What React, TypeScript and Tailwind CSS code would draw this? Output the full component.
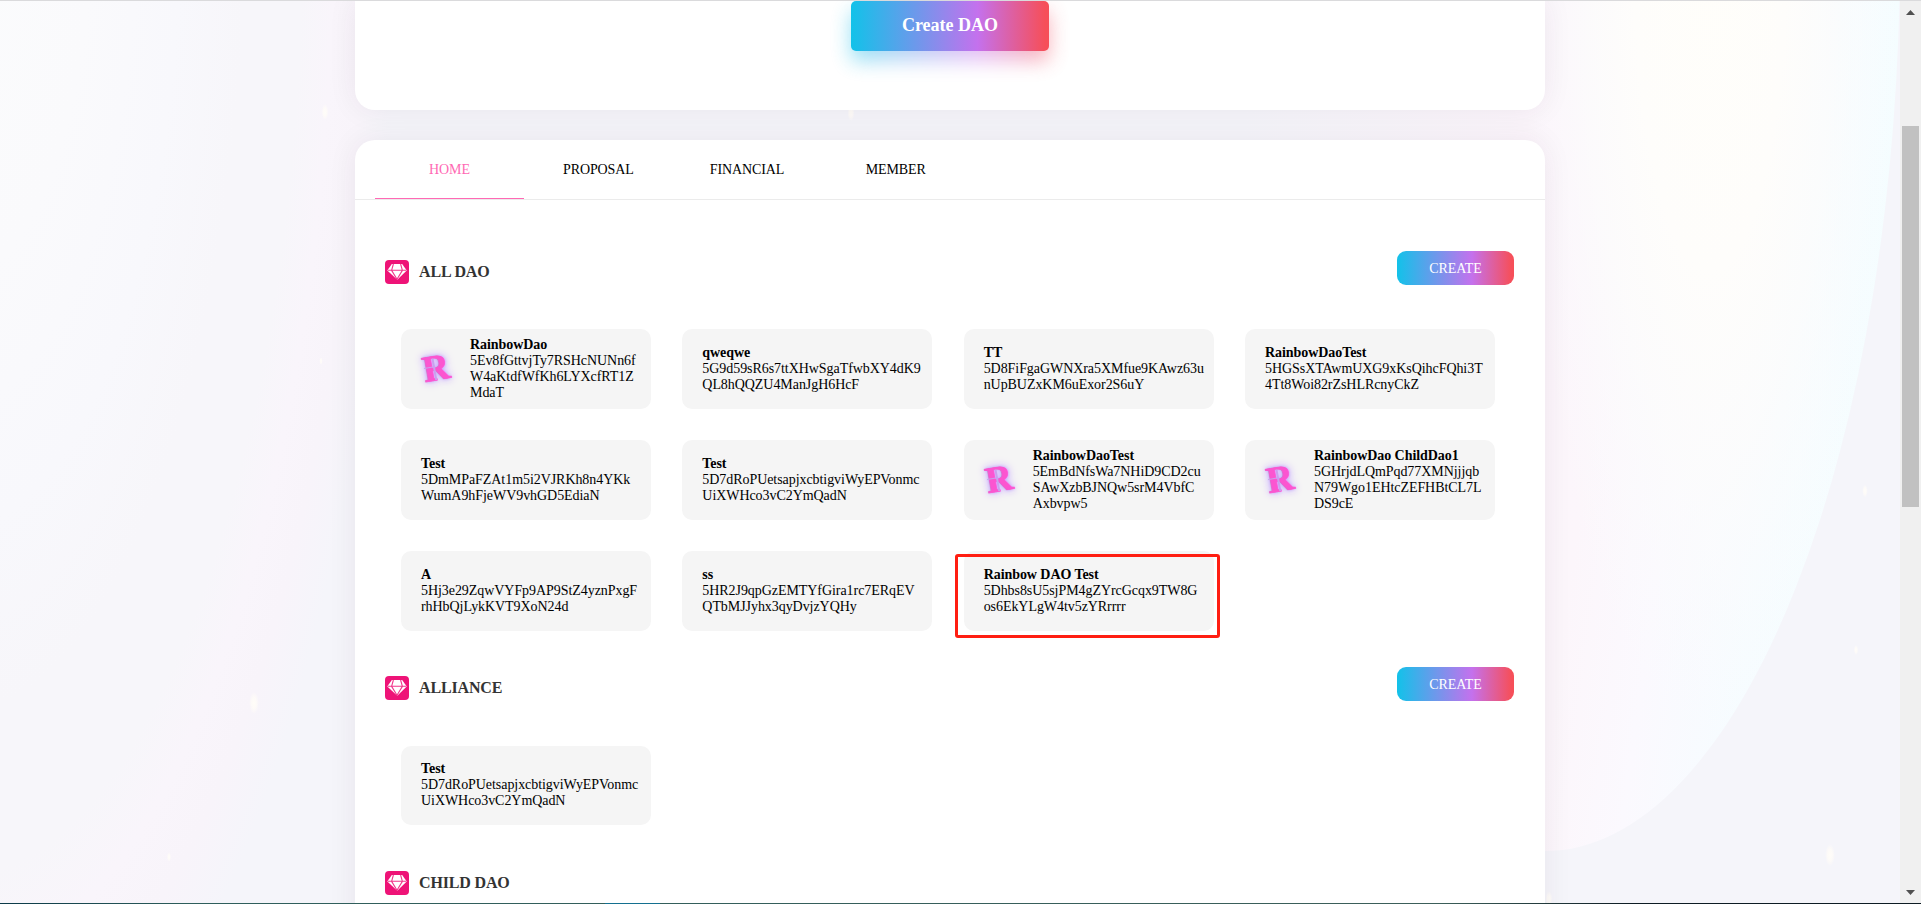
type Dao = { name: string; lines: string[]; logo?: boolean; marked?: boolean };

const allDao: Dao[] = [
  { name: "RainbowDao", lines: ["5Ev8fGttvjTy7RSHcNUNn6f", "W4aKtdfWfKh6LYXcfRT1Z", "MdaT"], logo: true },
  { name: "qweqwe", lines: ["5G9d59sR6s7ttXHwSgaTfwbXY4dK9", "QL8hQQZU4ManJgH6HcF"] },
  { name: "TT", lines: ["5D8FiFgaGWNXra5XMfue9KAwz63u", "nUpBUZxKM6uExor2S6uY"] },
  { name: "RainbowDaoTest", lines: ["5HGSsXTAwmUXG9xKsQihcFQhi3T", "4Tt8Woi82rZsHLRcnyCkZ"] },
  { name: "Test", lines: ["5DmMPaFZAt1m5i2VJRKh8n4YKk", "WumA9hFjeWV9vhGD5EdiaN"] },
  { name: "Test", lines: ["5D7dRoPUetsapjxcbtigviWyEPVonmc", "UiXWHco3vC2YmQadN"] },
  { name: "RainbowDaoTest", lines: ["5EmBdNfsWa7NHiD9CD2cu", "SAwXzbBJNQw5srM4VbfC", "Axbvpw5"], logo: true },
  { name: "RainbowDao ChildDao1", lines: ["5GHrjdLQmPqd77XMNjjjqb", "N79Wgo1EHtcZEFHBtCL7L", "DS9cE"], logo: true },
  { name: "A", lines: ["5Hj3e29ZqwVYFp9AP9StZ4yznPxgF", "rhHbQjLykKVT9XoN24d"] },
  { name: "ss", lines: ["5HR2J9qpGzEMTYfGira1rc7ERqEV", "QTbMJJyhx3qyDvjzYQHy"] },
  { name: "Rainbow DAO Test", lines: ["5Dhbs8sU5sjPM4gZYrcGcqx9TW8G", "os6EkYLgW4tv5zYRrrrr"], marked: true },
];

const alliance: Dao[] = [{ name: "Test", lines: ["5D7dRoPUetsapjxcbtigviWyEPVonmc", "UiXWHco3vC2YmQadN"] }];

function Diamond() {
  return (
    <svg width="24" height="24" viewBox="0 0 24 24" className="shrink-0">
      <rect width="24" height="24" rx="4" fill="#ee1377" />
      <path d="M6.8 4h10.400L21.700 10.400 12.300 19.800 2.300 10.400z" fill="#fff" />
      <path
        d="M3 10.300h18M8.400 4 6.600 10.300 12 19.300 17.400 10.300 15.600 4"
        fill="none"
        stroke="#ee1377"
        strokeOpacity="0.85"
        strokeWidth="1.100"
      />
    </svg>
  );
}

function Logo() {
  return (
    <div className="flex h-12 w-[49px] shrink-0 items-center pb-1">
      <div className="relative flex h-8 w-[30px] -rotate-10 items-center justify-center font-['Liberation_Serif',serif] text-[37px] leading-none font-bold text-[#fb55d0] [-webkit-text-stroke:0.8px_#fb55d0] [text-shadow:0_0_3px_#b593f5,0_0_7px_#c9a9ff,0_0_11px_#d5bfff]">
        R
        <div className="absolute top-[15px] left-[3px] h-px w-[9px] bg-[#c9a0ee]" />
        <div className="absolute top-[7px] left-[12px] h-[22px] w-[1.5px] bg-[#c9a0ee]" />
      </div>
    </div>
  );
}

function Card({ dao, size }: { dao: Dao; size: string }) {
  return (
    <div className={`relative flex w-[250px] items-center rounded-[10px] bg-[#f5f5f5] pl-5 ${size}`}>
      {dao.logo && <Logo />}
      <div className="text-[14px] leading-4 tracking-[-0.06px] whitespace-nowrap text-black">
        <div className="font-bold">{dao.name}</div>
        {dao.lines.map((l) => (
          <div key={l}>{l}</div>
        ))}
      </div>
      {dao.marked && (
        <div className="absolute top-[3px] -left-[9px] h-[84px] w-[265px] rounded-[3px] border-3 border-[#ff1e12]" />
      )}
    </div>
  );
}

function Heading({ title, action }: { title: string; action?: boolean }) {
  return (
    <div className="flex h-[42px] items-start justify-between pr-[31px] pl-[30px]">
      <div className="flex items-center gap-[10px] pt-[9px]">
        <Diamond />
        <h2 className="text-[16px] leading-6 font-bold tracking-[-0.15px] text-[#333]">{title}</h2>
      </div>
      {action && (
        <button className="h-[34px] w-[117px] rounded-[9px] bg-[linear-gradient(90deg,#12c2e9_0%,#c471ed_64%,#f64f59_98%)] pt-px text-[14px] leading-[33px] tracking-[-0.1px] text-white">
          CREATE
        </button>
      )}
    </div>
  );
}

const tabs = ["HOME", "PROPOSAL", "FINANCIAL", "MEMBER"];

const stars = [
  [325, 112, 2.5], [321, 361, 1.2], [254, 703, 3.5], [169, 857, 1.5], [851, 113, 2.5],
  [1865, 491, 2], [1856, 650, 1.6], [1830, 855, 3.5], [1549, 899, 2.5],
];

function Backdrop() {
  return (
    <svg className="absolute inset-0" width="1900" height="904" viewBox="0 0 1900 904">
      <defs>
        <radialGradient id="left" gradientUnits="userSpaceOnUse" cx="0" cy="0" r="1" gradientTransform="translate(-40 -100) scale(440 1250)">
          <stop offset="0" stopColor="#fbfcfd" />
          <stop offset="0.3" stopColor="#fafafc" />
          <stop offset="0.5" stopColor="#f8f8fc" />
          <stop offset="0.65" stopColor="#f7f6fa" />
          <stop offset="0.78" stopColor="#f7f6fa" />
          <stop offset="0.85" stopColor="#f9f5fb" />
          <stop offset="0.92" stopColor="#f8f4fa" />
          <stop offset="1" stopColor="#f5f5fa" />
        </radialGradient>
        <radialGradient id="orb" gradientUnits="userSpaceOnUse" cx="0" cy="0" r="1" gradientTransform="translate(1710 -50) scale(190 800)">
          <stop offset="0" stopColor="#fffefa" />
          <stop offset="0.4" stopColor="#fefdfb" />
          <stop offset="0.65" stopColor="#fcfcfc" stopOpacity="0.8" />
          <stop offset="1" stopColor="#fafbfe" stopOpacity="0" />
        </radialGradient>
        <linearGradient id="rim" gradientUnits="userSpaceOnUse" x1="1190" y1="500" x2="1900" y2="600">
          <stop offset="0" stopColor="#f5f5fa" />
          <stop offset="0.45" stopColor="#fcf5fb" />
          <stop offset="0.54" stopColor="#fcf6fb" />
          <stop offset="0.66" stopColor="#fbf9fe" />
          <stop offset="0.8" stopColor="#f6fcff" />
          <stop offset="1" stopColor="#f3feff" />
        </linearGradient>
        <radialGradient id="star">
          <stop offset="0" stopColor="#fffdf8" />
          <stop offset="0.5" stopColor="#fffcf8" stopOpacity="0.8" />
          <stop offset="1" stopColor="#fffcf8" stopOpacity="0" />
        </radialGradient>
      </defs>
      <rect width="1900" height="904" fill="#f5f5fa" />
      <rect width="400" height="904" fill="url(#left)" />
      <ellipse cx="1545" cy="-50" rx="355" ry="901" fill="url(#rim)" />
      <ellipse cx="1545" cy="-50" rx="355" ry="901" fill="url(#orb)" />
      {stars.map(([x, y, r]) => (
        <ellipse key={`${x}-${y}`} cx={x} cy={y} rx={r * 1.4} ry={r * 3.2} fill="url(#star)" />
      ))}
    </svg>
  );
}

function Scrollbar() {
  return (
    <div className="relative flex w-[21px] shrink-0 flex-col items-center bg-[#f0f0f0] pr-px">
      <svg width="9" height="5" viewBox="0 0 9 5" className="mt-[10px]">
        <path d="M0 5 4.500 0 9 5z" fill="#505050" />
      </svg>
      <div className="mt-[111px] h-[381px] w-[17px] bg-[#c1c1c1]" />
      <svg width="9" height="5" viewBox="0 0 9 5" className="mt-auto mb-[9px]">
        <path d="M0 0 4.500 5 9 0z" fill="#505050" />
      </svg>
    </div>
  );
}

export default function App() {
  return (
    <div className="relative flex h-[904px] w-[1921px] overflow-hidden font-['Liberation_Serif',serif]">
      <div className="relative w-[1900px] overflow-hidden">
        <Backdrop />
        <div className="relative mx-auto flex w-[1190px] flex-col gap-[30px]">
          <section className="flex h-[110px] justify-center rounded-b-[20px] bg-white pt-px shadow-[0_0_30px_rgba(60,30,60,0.07)]">
            <div className="relative h-[50px] w-[198px]">
              <div className="absolute inset-x-0 top-[10px] h-[50px] rounded-[5px] bg-[linear-gradient(90deg,#12c2e9,#c471ed_64%,#f64f59)] opacity-45 blur-[10px]" />
              <button className="relative h-[50px] w-[198px] rounded-[5px] bg-[linear-gradient(90deg,#12c2e9_0%,#c471ed_64%,#f64f59_98%)] pb-[2px] text-[18px] leading-[48px] font-bold text-white">
                Create DAO
              </button>
            </div>
          </section>
          <section className="h-[900px] rounded-[20px] bg-white shadow-[0_0_30px_rgba(60,30,60,0.07)]">
            <nav className="flex h-[60px] border-b border-[#ebebeb] pl-5">
              {tabs.map((t, i) => (
                <div
                  key={t}
                  className={
                    i === 0
                      ? "w-[149px] border-b border-[#ff69b4] text-center text-[14px] leading-[60px] tracking-[-0.1px] text-[#ff69b4]"
                      : "w-[148.7px] text-center text-[14px] leading-[60px] tracking-[-0.1px] text-black"
                  }
                >
                  {t}
                </div>
              ))}
            </nav>
            <div className="pt-[51px]">
              <Heading title="ALL DAO" action />
              <div className="mt-9 ml-[46px] grid w-[1094px] grid-cols-[repeat(4,250px)] justify-between gap-y-[31px]">
                {allDao.map((d, i) => (
                  <Card key={i} dao={d} size="h-20" />
                ))}
              </div>
            </div>
            <div className="pt-9">
              <Heading title="ALLIANCE" action />
              <div className="mt-[37px] ml-[46px] flex">
                {alliance.map((d, i) => (
                  <Card key={i} dao={d} size="h-[79px] pb-px" />
                ))}
              </div>
            </div>
            <div className="pt-[37px]">
              <Heading title="CHILD DAO" />
            </div>
          </section>
        </div>
      </div>
      <Scrollbar />
      <div className="absolute inset-x-0 top-0 h-px bg-[#dadadc]" />
      <div className="absolute inset-x-0 bottom-0 flex h-px bg-[linear-gradient(90deg,#0b3a48_0%,#2f5f5c_10%,#3c5f5a_75%,#0e1c24_85%)]">
        <div className="ml-[605px] w-[55px] bg-[#147090]" />
      </div>
    </div>
  );
}
